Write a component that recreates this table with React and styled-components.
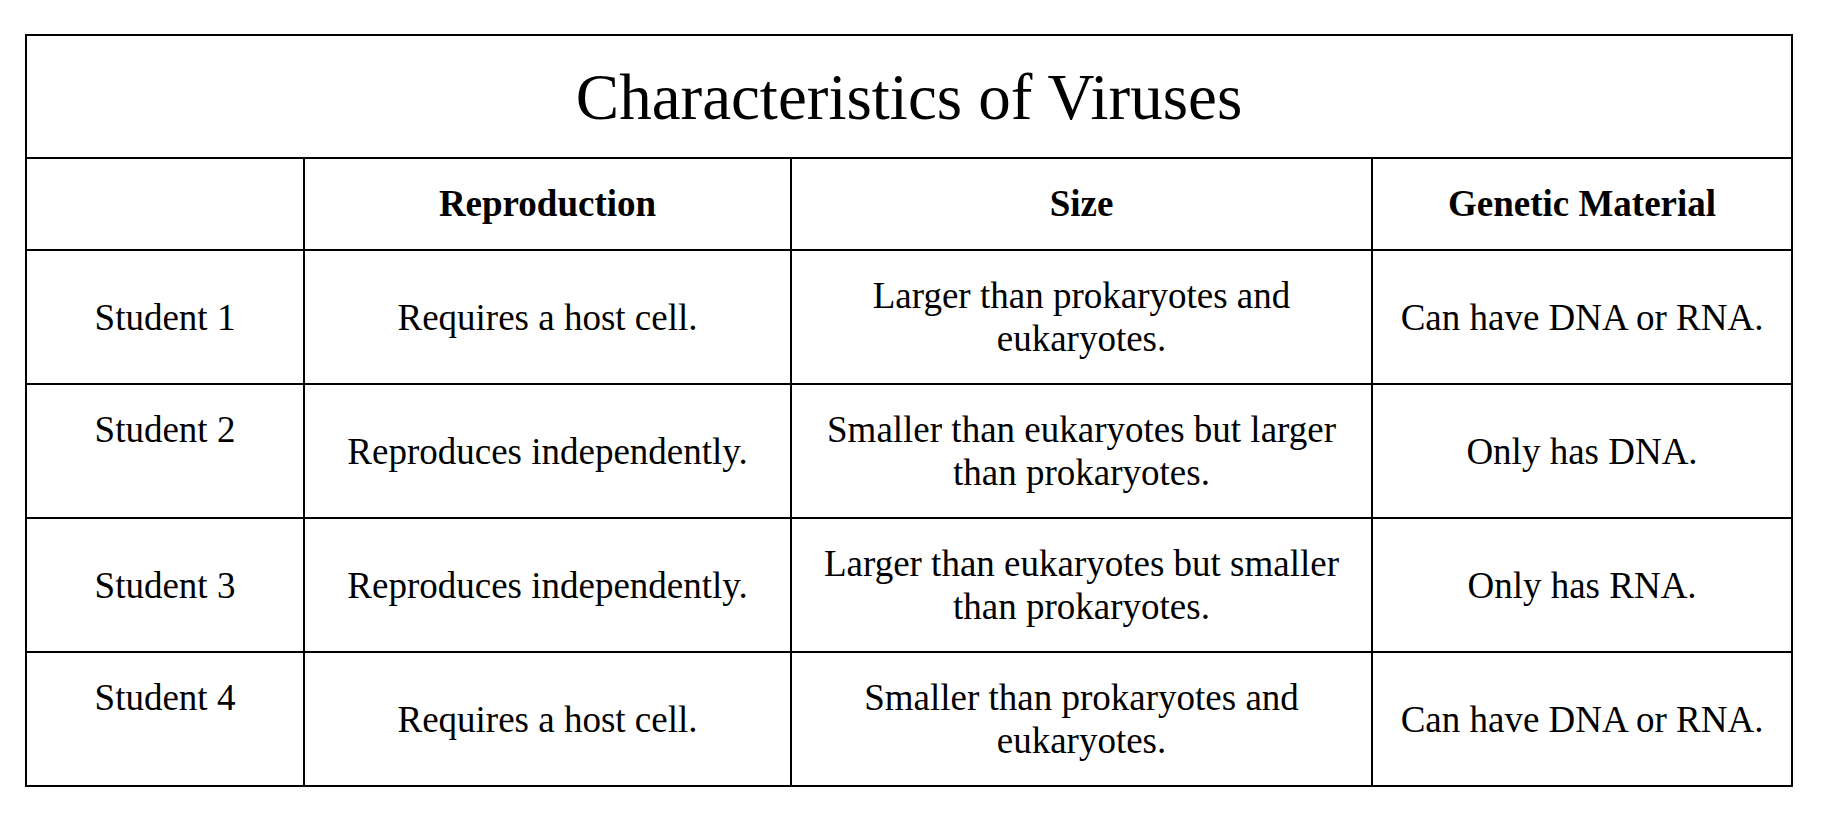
import React from "react";
import styled, { createGlobalStyle } from "styled-components";

const GlobalStyle = createGlobalStyle`
  html, body {
    margin: 0;
    padding: 0;
    background: #ffffff;
  }
  body {
    font-family: "Liberation Serif", "Times New Roman", serif;
    color: #000;
  }
`;

const Page = styled.div`
  padding: 34px 0 0 25px;
`;

const Table = styled.table`
  width: 1766px;
  border-collapse: collapse;
  table-layout: fixed;
  border: 2px solid #000;
  font-family: "Liberation Serif", "Times New Roman", serif;
`;

const TitleCell = styled.th`
  border: 2px solid #000;
  font-size: 65px;
  font-weight: 400;
  line-height: 1.2;
  padding: 22px 0 21px;
  text-align: center;
`;

const HeadCell = styled.th`
  border: 2px solid #000;
  font-size: 37px;
  font-weight: 700;
  line-height: 43px;
  padding: 23px 10px 24px;
  text-align: center;
  vertical-align: middle;
`;

const Cell = styled.td`
  border: 2px solid #000;
  font-size: 37px;
  line-height: 43px;
  padding: 23px 10px;
  text-align: center;
  vertical-align: ${(p) => (p.$top ? "top" : "middle")};
`;

const rows = [
  {
    name: "Student 1",
    top: false,
    reproduction: "Requires a host cell.",
    size: "Larger than prokaryotes and eukaryotes.",
    genetic: "Can have DNA or RNA.",
  },
  {
    name: "Student 2",
    top: true,
    reproduction: "Reproduces independently.",
    size: "Smaller than eukaryotes but larger than prokaryotes.",
    genetic: "Only has DNA.",
  },
  {
    name: "Student 3",
    top: false,
    reproduction: "Reproduces independently.",
    size: "Larger than eukaryotes but smaller than prokaryotes.",
    genetic: "Only has RNA.",
  },
  {
    name: "Student 4",
    top: true,
    reproduction: "Requires a host cell.",
    size: "Smaller than prokaryotes and eukaryotes.",
    genetic: "Can have DNA or RNA.",
  },
];

export default function App() {
  return (
    <Page>
      <GlobalStyle />
      <Table>
        <colgroup>
          <col style={{ width: 278 }} />
          <col style={{ width: 487 }} />
          <col style={{ width: 581 }} />
          <col style={{ width: 420 }} />
        </colgroup>
        <thead>
          <tr>
            <TitleCell colSpan={4}>Characteristics of Viruses</TitleCell>
          </tr>
          <tr>
            <HeadCell />
            <HeadCell>Reproduction</HeadCell>
            <HeadCell>Size</HeadCell>
            <HeadCell>Genetic Material</HeadCell>
          </tr>
        </thead>
        <tbody>
          {rows.map((r) => (
            <tr key={r.name}>
              <Cell $top={r.top}>{r.name}</Cell>
              <Cell>{r.reproduction}</Cell>
              <Cell>{r.size}</Cell>
              <Cell>{r.genetic}</Cell>
            </tr>
          ))}
        </tbody>
      </Table>
    </Page>
  );
}
